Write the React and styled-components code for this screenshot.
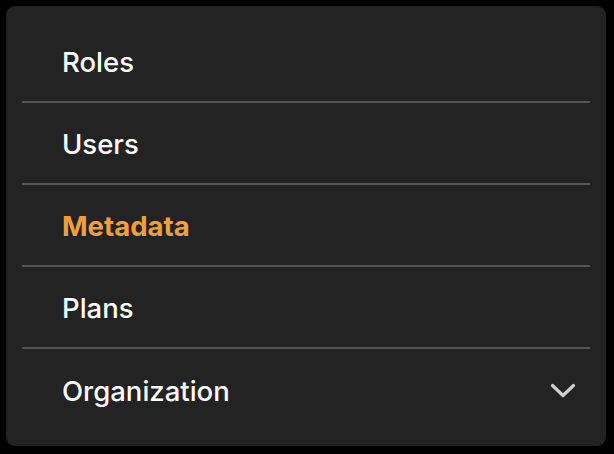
import styled, { createGlobalStyle } from 'styled-components';

const items = [
  { label: 'Roles' },
  { label: 'Users' },
  { label: 'Metadata', active: true },
  { label: 'Plans' },
  { label: 'Organization', expandable: true },
];

const App = () => {
  return (
    <Page>
      <GlobalStyle />
      <Menu>
        {items.map((item) => (
          <Row key={item.label}>
            <Label $active={item.active}>{item.label}</Label>
            {item.expandable && (
              <svg width="26" height="16" viewBox="0 0 26 16" fill="none">
                <path
                  d="M2.5 2.5 L13 12.5 L23.5 2.5"
                  stroke="#cfcfcf"
                  strokeWidth="3.2"
                  strokeLinecap="round"
                  strokeLinejoin="round"
                />
              </svg>
            )}
          </Row>
        ))}
      </Menu>
    </Page>
  );
};

const GlobalStyle = createGlobalStyle`
  html, body {
    margin: 0;
    background: #000;
  }
`;

const Page = styled.div`
  width: 614px;
  height: 454px;
  padding: 6px 8px 8px 6px;
  box-sizing: border-box;
  background: #000;
  font-family: Inter, 'Noto Sans', sans-serif;
`;

const Menu = styled.div`
  display: flex;
  flex-direction: column;
  height: 100%;
  padding: 15px 16px 15px;
  box-sizing: border-box;
  background: #232323;
  border-radius: 9px;
`;

const Row = styled.div`
  display: flex;
  align-items: center;
  justify-content: space-between;
  height: 82px;
  padding: 2px 14px 0 40px;
  box-sizing: border-box;
  border-bottom: 2px solid #545454;

  &:last-child {
    border-bottom: none;
  }
`;

const Label = styled.span`
  font-size: 27.5px;
  font-weight: ${(p) => (p.$active ? 700 : 550)};
  color: ${(p) => (p.$active ? '#f2a03d' : '#ffffff')};
`;

export default App;
